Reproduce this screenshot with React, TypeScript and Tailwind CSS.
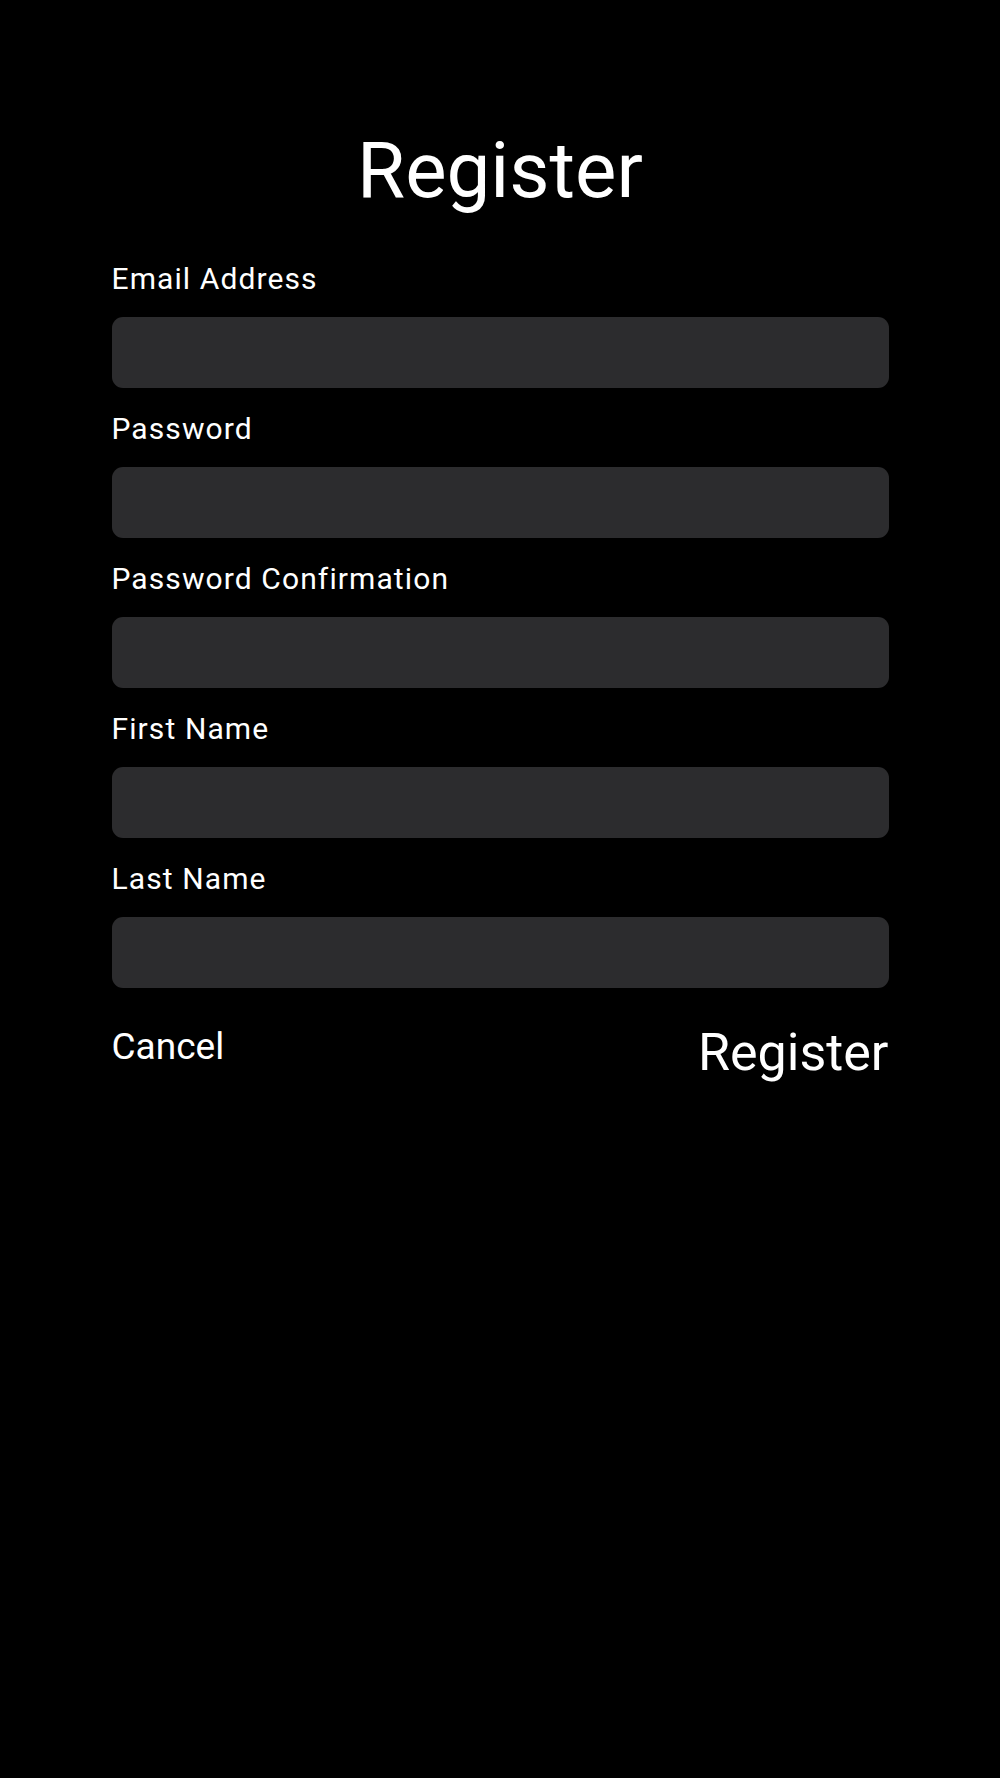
const fields = [
  'Email Address',
  'Password',
  'Password Confirmation',
  'First Name',
  'Last Name',
];

function Field({ label }: { label: string }) {
  return (
    <div className="flex flex-col">
      <label className="text-[30px] leading-[36px] tracking-[1.1px] text-white">{label}</label>
      <input
        type={label.startsWith('Password') ? 'password' : 'text'}
        className="mt-5 h-[71px] w-full rounded-[11px] bg-[#2c2c2e] px-4 text-[30px] text-white outline-none"
      />
    </div>
  );
}

export default function App() {
  return (
    <div
      className="min-h-[1778px] w-full bg-black text-white"
      style={{ fontFamily: 'Roboto, "Noto Sans", sans-serif' }}
    >
      <div className="mx-auto flex w-[777px] flex-col pt-[132px]">
        <h1 className="text-center text-[78px] leading-none font-normal">Register</h1>

        <div className="mt-[51px] flex flex-col gap-[23px]">
          {fields.map((f) => (
            <Field key={f} label={f} />
          ))}
        </div>

        <div className="mt-[40px] flex items-start justify-between">
          <button className="text-[37px] leading-none text-white">Cancel</button>
          <button className="-mt-px text-[52px] leading-none text-white">Register</button>
        </div>
      </div>
    </div>
  );
}
